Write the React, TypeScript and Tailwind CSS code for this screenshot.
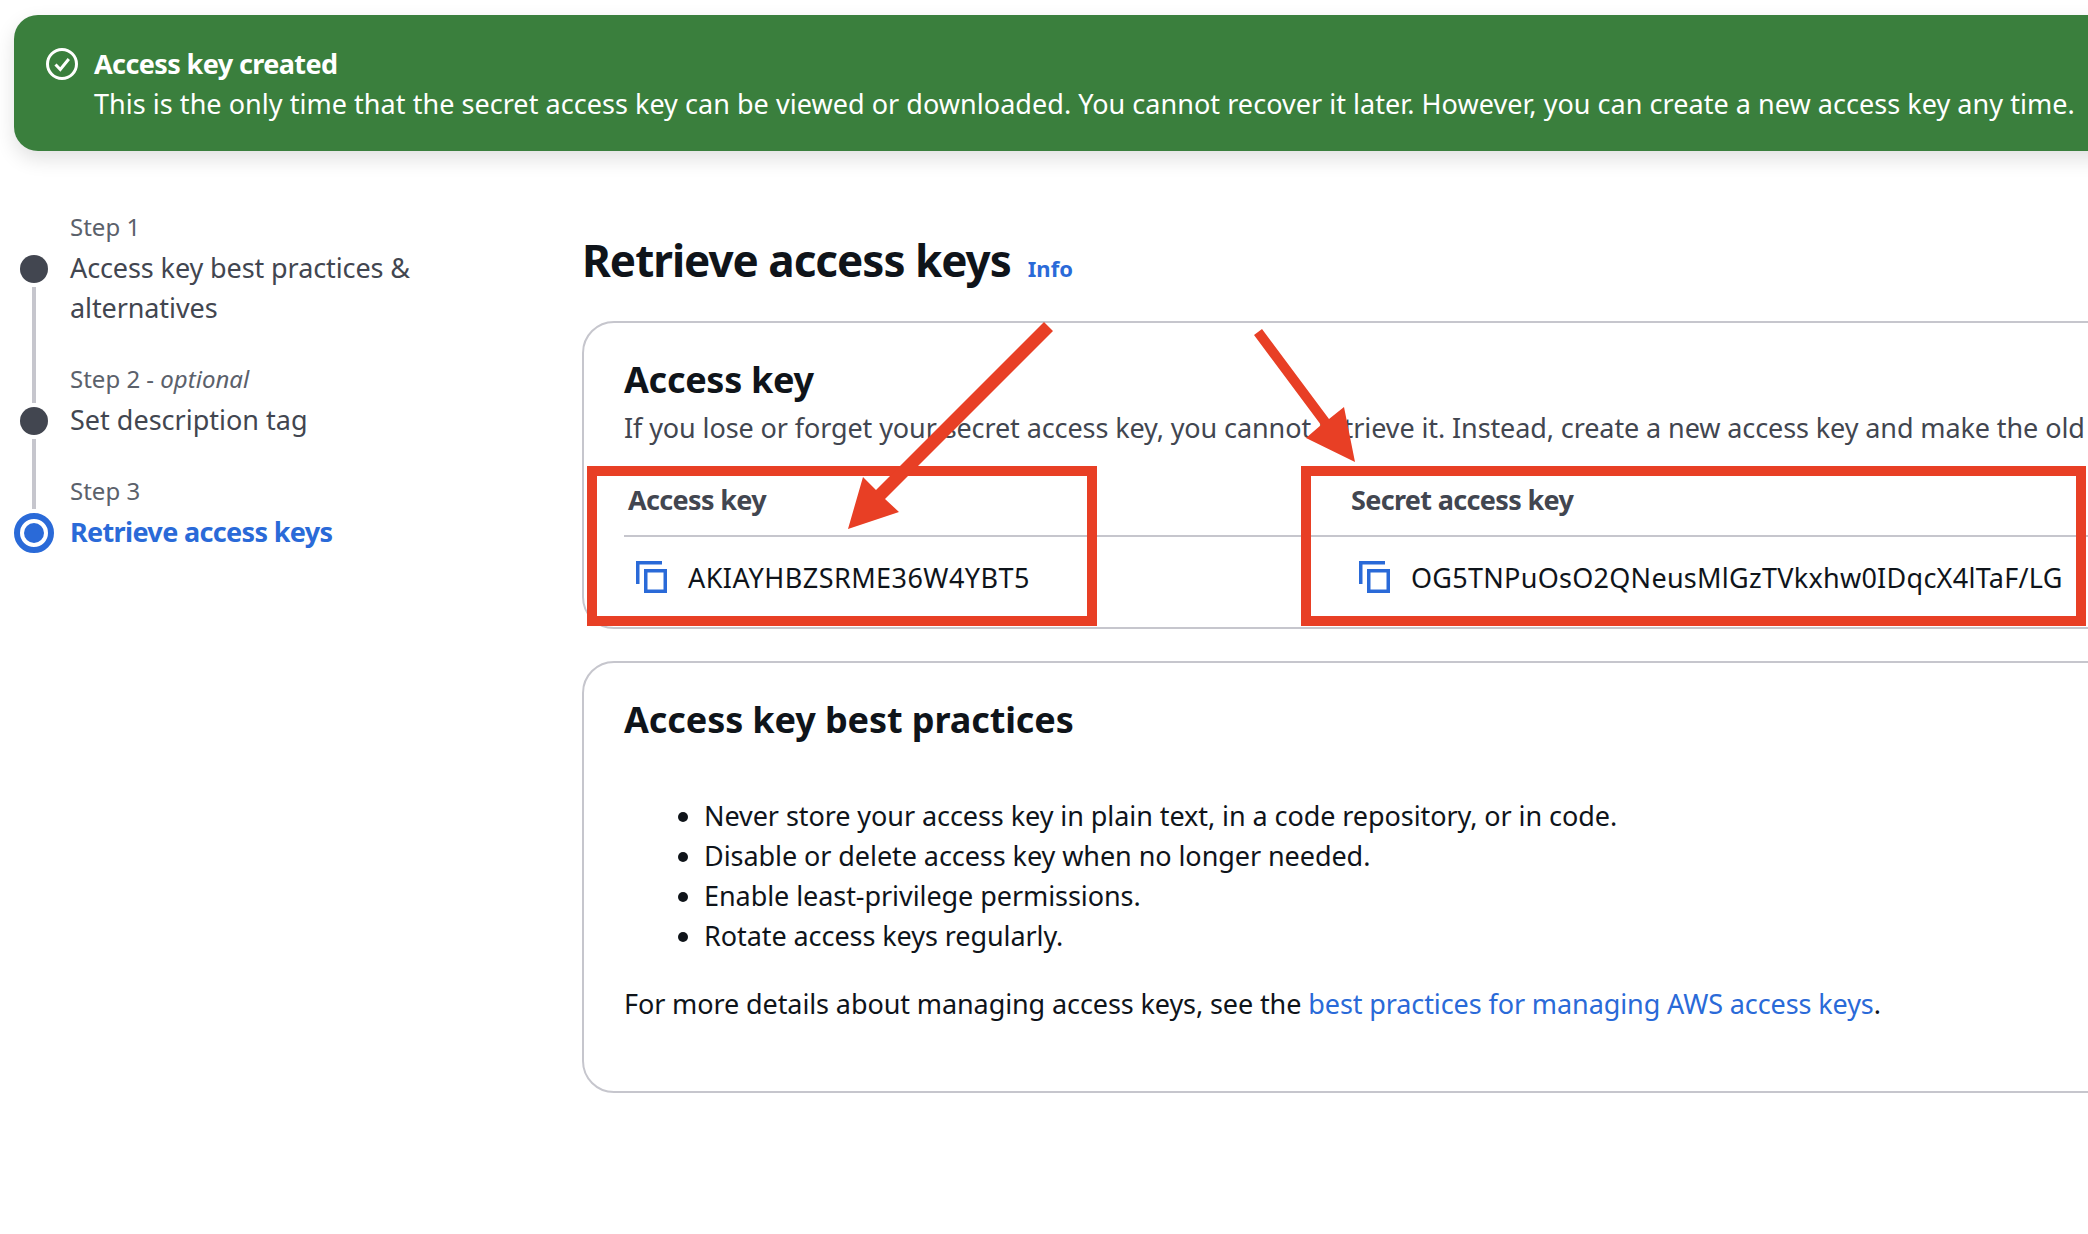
const font = "font-['Noto_Sans',sans-serif]"

function CopyIcon() {
  return (
    <svg className="w-[31px] h-[32px] shrink-0" viewBox="0 0 31 32" fill="none" stroke="#2a6ad8" strokeWidth={3.5} aria-hidden="true">
      <path d="M1.75 23V1.75H26" />
      <rect x="9.75" y="9.75" width="19.5" height="20.5" />
    </svg>
  )
}

function CheckIcon() {
  return (
    <svg className="w-8 h-8 shrink-0" viewBox="0 0 32 32" fill="none" stroke="white" strokeWidth={3} aria-hidden="true">
      <circle cx="16" cy="16" r="14.5" />
      <path d="M9.5 16.5l4.8 5 8.5-10.5" />
    </svg>
  )
}

function Step({ label, first, last, children }: { label: React.ReactNode; first?: boolean; last?: boolean; children: React.ReactNode }) {
  return (
    <div className="flex">
      <div className="w-[68px] flex flex-col items-center shrink-0">
        {first ? <div className="h-[47px]" /> : <div className={last ? 'w-1 h-[37px] bg-[#c6c6cd]' : 'w-1 h-[43px] bg-[#c6c6cd]'} />}
        {last ? (
          <div className="mt-1 w-10 h-10 rounded-full border-[6px] border-[#2a6ad8] flex items-center justify-center">
            <div className="w-5 h-5 rounded-full bg-[#2a6ad8]" />
          </div>
        ) : (
          <div className={first ? 'w-7 h-7 rounded-full bg-[#424650]' : 'mt-1 w-7 h-7 rounded-full bg-[#424650]'} />
        )}
        {!last && <div className="mt-1 w-1 flex-1 bg-[#c6c6cd]" />}
      </div>
      <div className={last ? 'pl-[2px]' : 'pl-[2px] pb-8'}>
        <div className="h-10 leading-[38px] text-[24px] text-[#5b616b]">{label}</div>
        {children}
      </div>
    </div>
  )
}

function KeyColumn({ label, value, width, boxClass, valueClass }: { label: string; value: string; width: string; boxClass: string; valueClass: string }) {
  return (
    <div className={`relative ${width}`}>
      <div className="pt-[10px] pl-[4px] border-b-2 border-[#c6c6cd] h-[67px] leading-10 font-bold tracking-[-0.65px] text-[#424650]">{label}</div>
      <div className="pl-3 flex items-center gap-[21px] h-[80px] text-[#0f141a]">
        <CopyIcon />
        <span className={`mt-[2px] whitespace-nowrap ${valueClass}`}>{value}</span>
      </div>
      <div className={`absolute top-[-4px] h-[160px] border-[10px] border-[#e83f25] ${boxClass}`} />
    </div>
  )
}

export default function App() {
  return (
    <div className={`relative w-[2088px] h-[1234px] overflow-hidden bg-white pt-[15px] text-[27px] leading-10 text-[#0f141a] ${font}`}>
      {/* Success banner */}
      <div className="ml-[14px] w-[2200px] h-[136px] rounded-[24px] bg-[#3a7f3d] text-white flex gap-4 pl-8 pt-[29px] shadow-[0_8px_20px_rgba(0,0,0,0.12)]">
        <div className="pt-1"><CheckIcon /></div>
        <div className="whitespace-nowrap">
          <div className="font-bold tracking-[-0.6px]">Access key created</div>
          <div className="tracking-[0.04px]">This is the only time that the secret access key can be viewed or downloaded. You cannot recover it later. However, you can create a new access key any time.</div>
        </div>
      </div>

      <div className="flex mt-[57px]">
        {/* Wizard steps */}
        <div className="w-[582px] shrink-0">
          <Step label="Step 1" first>
            <div className="w-[400px] text-[#424650] tracking-[-0.1px]">Access key best practices &amp; alternatives</div>
          </Step>
          <Step label={<>Step 2 - <i>optional</i></>}>
            <div className="text-[#424650]">Set description tag</div>
          </Step>
          <Step label="Step 3" last>
            <div className="font-bold text-[#2a6ad8] tracking-[-0.65px]">Retrieve access keys</div>
          </Step>
        </div>

        {/* Main column */}
        <div className="w-[1700px] shrink-0 pt-[24px]">
          <div className="flex items-baseline gap-[17px] h-14">
            <h1 className="text-[44px] leading-[56px] font-bold tracking-[-1px]">Retrieve access keys</h1>
            <span className="text-[22px] font-bold text-[#2a6ad8]">Info</span>
          </div>

          <div className="mt-[33px] h-[308px] rounded-[32px] border-2 border-[#c6c6cd] pt-[33px] pl-10 whitespace-nowrap">
            <h2 className="text-[36px] leading-[48px] font-bold tracking-[-0.3px]">Access key</h2>
            <p className="mt-1 text-[#424650] tracking-[-0.1px]">If you lose or forget your secret access key, you cannot retrieve it. Instead, create a new access key and make the old</p>
            <div className="mt-[22px] flex">
              <KeyColumn label="Access key" value="AKIAYHBZSRME36W4YBT5" width="w-[723px]" boxClass="left-[-37px] w-[510px]" valueClass="tracking-[0.45px]" />
              <KeyColumn label="Secret access key" value="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" width="w-[900px]" boxClass="left-[-46px] w-[785px]" valueClass="tracking-[0.27px]" />
            </div>
          </div>

          <div className="mt-8 h-[432px] rounded-[32px] border-2 border-[#c6c6cd] pt-[33px] pl-10 whitespace-nowrap">
            <h2 className="text-[36px] leading-[48px] font-bold tracking-[-0.1px]">Access key best practices</h2>
            <ul className="mt-[52px] pl-20 list-disc tracking-[-0.07px]">
              <li>Never store your access key in plain text, in a code repository, or in code.</li>
              <li>Disable or delete access key when no longer needed.</li>
              <li>Enable least-privilege permissions.</li>
              <li>Rotate access keys regularly.</li>
            </ul>
            <p className="mt-7 tracking-[-0.1px]">
              For more details about managing access keys, see the{' '}
              <span className="text-[#2a6ad8]">best practices for managing AWS access keys</span>.
            </p>
          </div>
        </div>
      </div>

      {/* Red annotation arrows */}
      <svg className="absolute left-0 top-0 w-[2088px] h-[1234px] pointer-events-none" viewBox="0 0 2088 1234" aria-hidden="true">
        <polygon fill="#e83f25" points="1044,322 1053,331 885,499 899,512 848,529 863,477 876,490" />
        <polygon fill="#e83f25" points="1262,329 1254,335 1321,425 1306,438 1355,462 1344,407 1329,419" />
      </svg>
    </div>
  )
}
